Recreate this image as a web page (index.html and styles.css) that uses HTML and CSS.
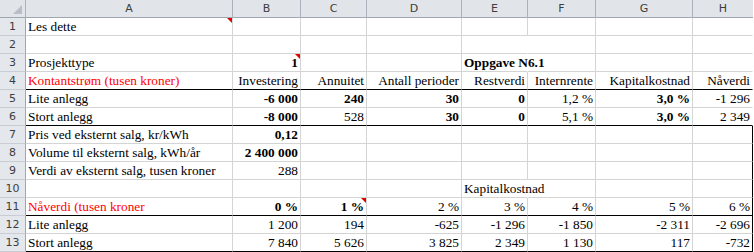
FILE: index.html
```html
<!DOCTYPE html>
<html>
<head>
<meta charset="utf-8">
<link rel="stylesheet" href="styles.css">
</head>
<body>
<div class="sheet">
  <div class="hd corner"><span class="corner-tri"></span></div>
  <div class="hd">A</div><div class="hd">B</div><div class="hd">C</div><div class="hd">D</div><div class="hd">E</div><div class="hd">F</div><div class="hd">G</div><div class="hd hd-last">H</div>

  <div class="rn">1</div>
  <div class="c cm-host">Les dette<span class="cm"></span></div><div class="c"></div><div class="c"></div><div class="c"></div><div class="c"></div><div class="c"></div><div class="c"></div><div class="c open"></div>

  <div class="rn">2</div>
  <div class="c"></div><div class="c"></div><div class="c"></div><div class="c"></div><div class="c nr"></div><div class="c"></div><div class="c"></div><div class="c open"></div>

  <div class="rn">3</div>
  <div class="c">Prosjekttype</div><div class="c r b cm-host">1<span class="cm"></span></div><div class="c"></div><div class="c"></div><div class="c nr b">Oppgave N6.1</div><div class="c"></div><div class="c"></div><div class="c open"></div>

  <div class="rn">4</div>
  <div class="c red bb">Kontantstrøm (tusen kroner)</div><div class="c r bb">Investering</div><div class="c r bb">Annuitet</div><div class="c r bb">Antall perioder</div><div class="c r bb">Restverdi</div><div class="c r bb">Internrente</div><div class="c r bb">Kapitalkostnad</div><div class="c r bb open">Nåverdi</div>

  <div class="rn">5</div>
  <div class="c">Lite anlegg</div><div class="c r b">-6 000</div><div class="c r b">240</div><div class="c r b">30</div><div class="c r b">0</div><div class="c r">1,2 %</div><div class="c r b">3,0 %</div><div class="c r open">-1 296</div>

  <div class="rn">6</div>
  <div class="c bb">Stort anlegg</div><div class="c r b bb">-8 000</div><div class="c r bb">528</div><div class="c r b bb">30</div><div class="c r b bb">0</div><div class="c r bb">5,1 %</div><div class="c r b bb">3,0 %</div><div class="c r bb open">2 349</div>

  <div class="rn">7</div>
  <div class="c">Pris ved eksternt salg, kr/kWh</div><div class="c r b">0,12</div><div class="c"></div><div class="c"></div><div class="c"></div><div class="c"></div><div class="c"></div><div class="c br"></div>

  <div class="rn">8</div>
  <div class="c">Volume til eksternt salg, kWh/år</div><div class="c r b">2 400 000</div><div class="c"></div><div class="c"></div><div class="c"></div><div class="c"></div><div class="c"></div><div class="c br"></div>

  <div class="rn">9</div>
  <div class="c">Verdi av eksternt salg, tusen kroner</div><div class="c r">288</div><div class="c"></div><div class="c"></div><div class="c"></div><div class="c"></div><div class="c"></div><div class="c br"></div>

  <div class="rn">10</div>
  <div class="c"></div><div class="c"></div><div class="c"></div><div class="c"></div><div class="c nr">Kapitalkostnad</div><div class="c"></div><div class="c"></div><div class="c br"></div>

  <div class="rn">11</div>
  <div class="c red bb">Nåverdi (tusen kroner</div><div class="c r b bb">0 %</div><div class="c r b bb cm-host">1 %<span class="cm"></span></div><div class="c r bb">2 %</div><div class="c r bb">3 %</div><div class="c r bb">4 %</div><div class="c r bb">5 %</div><div class="c r bb br">6 %</div>

  <div class="rn">12</div>
  <div class="c">Lite anlegg</div><div class="c r">1 200</div><div class="c r">194</div><div class="c r">-625</div><div class="c r">-1 296</div><div class="c r">-1 850</div><div class="c r">-2 311</div><div class="c r br">-2 696</div>

  <div class="rn">13</div>
  <div class="c bb">Stort anlegg</div><div class="c r bb">7 840</div><div class="c r bb">5 626</div><div class="c r bb">3 825</div><div class="c r bb">2 349</div><div class="c r bb">1 130</div><div class="c r bb">117</div><div class="c r bb br">-732</div>
</div>
</body>
</html>
```

FILE: styles.css
```css
html, body {
  margin: 0;
  padding: 0;
  background: #ffffff;
}

.sheet {
  display: grid;
  grid-template-columns: 26px 207px 68px 66px 95px 66px 68px 97px 60px;
  grid-template-rows: 18px repeat(13, 18px);
  width: 753px;
  font-family: "Liberation Serif", "Times New Roman", serif;
  font-size: 13.3px;
  color: #000;
}

.hd {
  background: #e1e5ea;
  border-right: 1px solid #abb2bb;
  border-bottom: 1px solid #9ea6b0;
  box-sizing: border-box;
  font-family: "DejaVu Sans", "Open Sans", sans-serif;
  font-size: 11px;
  color: #3d3d3d;
  text-align: center;
  line-height: 17px;
}

.hd-last {
  border-right: none;
}

.corner {
  position: relative;
}

.corner-tri {
  position: absolute;
  right: 3px;
  bottom: 3px;
  width: 0;
  height: 0;
  border-left: 9px solid transparent;
  border-bottom: 9px solid #b9bec6;
}

.rn {
  background: #e4e7eb;
  border-right: 1px solid #9ea6b0;
  border-bottom: 1px solid #c9cdd3;
  box-sizing: border-box;
  font-family: "DejaVu Sans", "Open Sans", sans-serif;
  font-size: 11px;
  color: #3d3d3d;
  text-align: center;
  line-height: 17px;
}

.c {
  border-right: 1px solid #d4d4d4;
  border-bottom: 1px solid #d4d4d4;
  box-sizing: border-box;
  white-space: nowrap;
  overflow: visible;
  line-height: 18px;
  padding: 0 2px 0 2px;
  position: relative;
}

.r {
  text-align: right;
  padding-right: 2px;
}

.b {
  font-weight: bold;
}

.red {
  color: #ff0000;
}

.bb {
  border-bottom: 1px solid #000;
}

.nr {
  border-right-color: transparent;
  z-index: 1;
}

.open {
  border-right-color: transparent;
}

.br {
  border-right: 1px solid #000;
}

.cm {
  position: absolute;
  top: 0;
  right: 0;
  width: 0;
  height: 0;
  border-left: 5px solid transparent;
  border-top: 5px solid #e00000;
}
```
